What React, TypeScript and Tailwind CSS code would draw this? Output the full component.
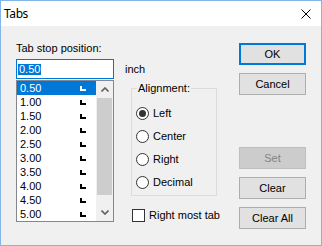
import React from "react";

const stops = ["0.50", "1.00", "1.50", "2.00", "2.50", "3.00", "3.50", "4.00", "4.50", "5.00"];
const alignments = ["Left", "Center", "Right", "Decimal"];

function TabMark({ white }: { white?: boolean }) {
  return (
    <svg width="6" height="5" viewBox="0 0 6 5" className="mt-[5px] shrink-0">
      <path d="M0 0h2v3h4v2H0z" fill={white ? "#ffffff" : "#000000"} />
    </svg>
  );
}

function Radio({ label, checked }: { label: string; checked?: boolean }) {
  return (
    <div className="flex h-[23px] items-center gap-[4px] pl-[4px]">
      <div className="flex h-[13px] w-[13px] items-center justify-center rounded-full border border-[#333333] bg-white">
        {checked && <div className="h-[7px] w-[7px] rounded-full bg-[#333333]" />}
      </div>
      <span>{label}</span>
    </div>
  );
}

function Button({ label, primary, disabled }: { label: string; primary?: boolean; disabled?: boolean }) {
  const base = "flex h-[22px] w-[67px] items-center justify-center";
  if (disabled)
    return <div className={`${base} border border-[#bfbfbf] bg-[#cccccc] text-[#838383]`}>{label}</div>;
  if (primary)
    return <div className={`${base} border-2 border-[#0078d7] bg-[#e1e1e1] text-black`}>{label}</div>;
  return <div className={`${base} border border-[#adadad] bg-[#e1e1e1] text-black`}>{label}</div>;
}

export default function App() {
  return (
    <div className="flex h-[246px] w-[322px] flex-col border border-[#83b5e6] bg-[#f0f0f0] font-['Liberation_Sans',Arial,sans-serif] text-[11px] leading-[13px] text-black">
      {/* Title bar */}
      <div className="flex h-[25px] shrink-0 items-center justify-between bg-white pl-[3px] pr-[10px]">
        <span className="font-['Noto_Sans',sans-serif] text-[12px] leading-[16px] tracking-[-0.4px]">Tabs</span>
        <svg width="10" height="10" viewBox="0 0 10 10">
          <path d="M0.5 0.5l9 9M9.5 0.5l-9 9" stroke="#000" strokeWidth="1" />
        </svg>
      </div>

      {/* Body */}
      <div className="flex flex-1">
        <div className="flex flex-col pl-[15px] pt-[16px]">
          <span>Tab stop position:</span>

          <div className="mt-[4px] flex items-center">
            <div className="flex h-[20px] w-[98px] items-center border border-[#0078d7] bg-white pl-[1px]">
              <span className="bg-[#0078d7] px-[1px] leading-[11px] text-white">0.50</span>
            </div>
            <span className="ml-[11px]">inch</span>
          </div>

          <div className="mt-[1px] flex items-start">
            {/* List box */}
            <div className="flex h-[142px] w-[98px] border border-[#828790] bg-white">
              <div className="flex w-[79px] flex-col">
                {stops.map((s, i) => (
                  <div
                    key={s}
                    className={`flex h-[14px] leading-[14px] ${i === 0 ? "bg-[#0078d7] text-white" : ""}`}
                  >
                    <span className="w-[63px] pl-[3px]">{s}</span>
                    <TabMark white={i === 0} />
                  </div>
                ))}
              </div>
              <div className="flex w-[17px] flex-col bg-[#f0f0f0]">
                <div className="flex h-[17px] items-center justify-center">
                  <svg width="8" height="5" viewBox="0 0 8 5">
                    <path d="M0.5 4.5L4 1l3.5 3.5" stroke="#606060" strokeWidth="1.6" fill="none" />
                  </svg>
                </div>
                <div className="mx-[1px] h-[97px] bg-[#cdcdcd]" />
                <div className="flex-1" />
                <div className="flex h-[17px] items-center justify-center">
                  <svg width="8" height="5" viewBox="0 0 8 5">
                    <path d="M0.5 0.5L4 4l3.5-3.5" stroke="#606060" strokeWidth="1.6" fill="none" />
                  </svg>
                </div>
              </div>
            </div>

            {/* Alignment group + checkbox */}
            <div className="ml-[17px] mt-[2px] flex flex-col">
              <fieldset className="h-[114px] w-[86px] border border-[#dcdcdc]">
                <legend className="ml-[5px] px-[1px]">Alignment:</legend>
                <div className="flex flex-col pt-[7px]">
                  {alignments.map((a, i) => (
                    <Radio key={a} label={a} checked={i === 0} />
                  ))}
                </div>
              </fieldset>
              <div className="ml-[1px] mt-[13px] flex items-center gap-[4px]">
                <div className="h-[13px] w-[13px] border border-[#333333] bg-white" />
                <span>Right most tab</span>
              </div>
            </div>
          </div>
        </div>

        {/* Buttons */}
        <div className="ml-auto flex flex-col pr-[15px] pt-[17px]">
          <div className="flex flex-col gap-[8px]">
            <Button label="OK" primary />
            <Button label="Cancel" />
          </div>
          <div className="mt-[52px] flex flex-col gap-[8px]">
            <Button label="Set" disabled />
            <Button label="Clear" />
            <Button label="Clear All" />
          </div>
        </div>
      </div>
    </div>
  );
}
